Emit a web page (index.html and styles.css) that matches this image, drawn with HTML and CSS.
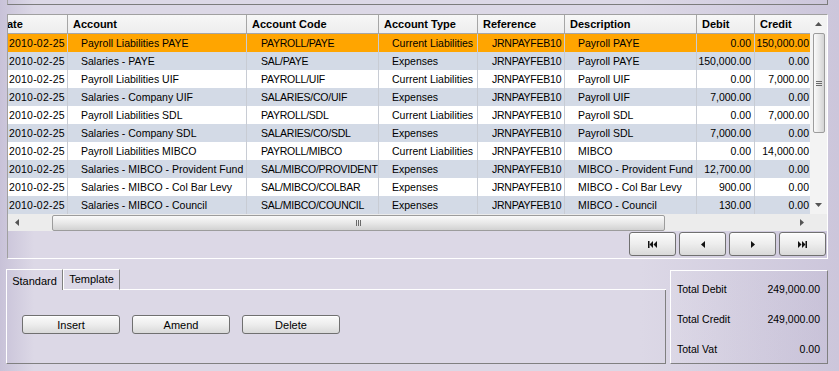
FILE: index.html
```html
<!DOCTYPE html>
<html>
<head>
<meta charset="utf-8">
<link rel="stylesheet" href="styles.css">
</head>
<body>
<div class="top-strip"></div>
<div class="grid-panel">
  <div class="grid-main">
    <div class="grid-view">
      <table class="grid">
        <colgroup>
          <col class="c-date"><col class="c-acc"><col class="c-code"><col class="c-type"><col class="c-ref"><col class="c-desc"><col class="c-deb"><col class="c-cre">
        </colgroup>
        <thead>
          <tr><th>Date</th><th>Account</th><th>Account Code</th><th>Account Type</th><th>Reference</th><th>Description</th><th>Debit</th><th class="last">Credit</th></tr>
        </thead>
        <tbody>
          <tr class="sel"><td class="d">2010-02-25</td><td>Payroll Liabilities PAYE</td><td class="caps">PAYROLL/PAYE</td><td>Current Liabilities</td><td class="caps">JRNPAYFEB10</td><td>Payroll PAYE</td><td class="num">0.00</td><td class="num last">150,000.00</td></tr>
          <tr class="alt"><td class="d">2010-02-25</td><td>Salaries - PAYE</td><td class="caps">SAL/PAYE</td><td>Expenses</td><td class="caps">JRNPAYFEB10</td><td>Payroll PAYE</td><td class="num">150,000.00</td><td class="num last">0.00</td></tr>
          <tr><td class="d">2010-02-25</td><td>Payroll Liabilities UIF</td><td class="caps">PAYROLL/UIF</td><td>Current Liabilities</td><td class="caps">JRNPAYFEB10</td><td>Payroll UIF</td><td class="num">0.00</td><td class="num last">7,000.00</td></tr>
          <tr class="alt"><td class="d">2010-02-25</td><td>Salaries - Company UIF</td><td class="caps">SALARIES/CO/UIF</td><td>Expenses</td><td class="caps">JRNPAYFEB10</td><td>Payroll UIF</td><td class="num">7,000.00</td><td class="num last">0.00</td></tr>
          <tr><td class="d">2010-02-25</td><td>Payroll Liabilities SDL</td><td class="caps">PAYROLL/SDL</td><td>Current Liabilities</td><td class="caps">JRNPAYFEB10</td><td>Payroll SDL</td><td class="num">0.00</td><td class="num last">7,000.00</td></tr>
          <tr class="alt"><td class="d">2010-02-25</td><td>Salaries - Company SDL</td><td class="caps">SALARIES/CO/SDL</td><td>Expenses</td><td class="caps">JRNPAYFEB10</td><td>Payroll SDL</td><td class="num">7,000.00</td><td class="num last">0.00</td></tr>
          <tr><td class="d">2010-02-25</td><td>Payroll Liabilities MIBCO</td><td class="caps">PAYROLL/MIBCO</td><td>Current Liabilities</td><td class="caps">JRNPAYFEB10</td><td>MIBCO</td><td class="num">0.00</td><td class="num last">14,000.00</td></tr>
          <tr class="alt"><td class="d">2010-02-25</td><td>Salaries - MIBCO - Provident Fund</td><td class="caps">SAL/MIBCO/PROVIDENT</td><td>Expenses</td><td class="caps">JRNPAYFEB10</td><td>MIBCO - Provident Fund</td><td class="num">12,700.00</td><td class="num last">0.00</td></tr>
          <tr><td class="d">2010-02-25</td><td>Salaries - MIBCO - Col Bar Levy</td><td class="caps">SAL/MIBCO/COLBAR</td><td>Expenses</td><td class="caps">JRNPAYFEB10</td><td>MIBCO - Col Bar Levy</td><td class="num">900.00</td><td class="num last">0.00</td></tr>
          <tr class="alt"><td class="d">2010-02-25</td><td>Salaries - MIBCO - Council</td><td class="caps">SAL/MIBCO/COUNCIL</td><td>Expenses</td><td class="caps">JRNPAYFEB10</td><td>MIBCO - Council</td><td class="num">130.00</td><td class="num last">0.00</td></tr>
        </tbody>
      </table>
    </div>
    <div class="vscroll">
      <div class="varrow"><svg width="7" height="4" viewBox="0 0 7 4"><polygon points="0,4 3.5,0 7,4" fill="#555"/></svg></div>
      <div class="vthumb"><span class="hgrip"></span><span class="hgrip"></span><span class="hgrip"></span></div>
      <div class="vtrack"></div>
      <div class="varrow"><svg width="7" height="4" viewBox="0 0 7 4"><polygon points="0,0 3.5,4 7,0" fill="#555"/></svg></div>
    </div>
  </div>
  <div class="hscroll-row">
    <div class="harrow"><svg width="4" height="7" viewBox="0 0 4 7"><polygon points="4,0 0,3.5 4,7" fill="#555"/></svg></div>
    <div class="htrack-l"></div>
    <div class="hthumb"><span class="vgrip"></span><span class="vgrip"></span><span class="vgrip"></span></div>
    <div class="htrack-r"></div>
    <div class="harrow"><svg width="4" height="7" viewBox="0 0 4 7"><polygon points="0,0 4,3.5 0,7" fill="#555"/></svg></div>
    <div class="corner"></div>
  </div>
  <div class="nav">
    <div class="btn navbtn"><svg width="9" height="7" viewBox="0 0 9 7"><rect x="0" y="0" width="1.5" height="7" fill="#111"/><polygon points="5,0 1.5,3.5 5,7" fill="#111"/><polygon points="9,0 5.5,3.5 9,7" fill="#111"/></svg></div>
    <div class="btn navbtn"><svg width="4" height="7" viewBox="0 0 4 7"><polygon points="4,0 0,3.5 4,7" fill="#111"/></svg></div>
    <div class="btn navbtn"><svg width="4" height="7" viewBox="0 0 4 7"><polygon points="0,0 4,3.5 0,7" fill="#111"/></svg></div>
    <div class="btn navbtn"><svg width="9" height="7" viewBox="0 0 9 7"><polygon points="0,0 3.5,3.5 0,7" fill="#111"/><polygon points="4,0 7.5,3.5 4,7" fill="#111"/><rect x="7.5" y="0" width="1.5" height="7" fill="#111"/></svg></div>
  </div>
</div>
<div class="bottom">
  <div class="tabs-area">
    <div class="tabs">
      <div class="tab active">Standard</div>
      <div class="tab">Template</div>
      <div class="tab-rest"></div>
    </div>
    <div class="tab-panel">
      <div class="btn action">Insert</div>
      <div class="btn action">Amend</div>
      <div class="btn action">Delete</div>
    </div>
  </div>
  <div class="totals">
    <div class="trow"><span>Total Debit</span><span>249,000.00</span></div>
    <div class="trow"><span>Total Credit</span><span>249,000.00</span></div>
    <div class="trow"><span>Total Vat</span><span>0.00</span></div>
  </div>
</div>
</body>
</html>
```

FILE: styles.css
```css
* { box-sizing: border-box; }

body {
  margin: 0;
  width: 839px;
  height: 371px;
  overflow: hidden;
  font-family: "Liberation Sans", Arial, sans-serif;
  font-size: 10.5px;
  color: #000;
  background: linear-gradient(to right, #c8c2d8 0px, #dcd8e6 34px, #dcd8e6 640px, #ccc6db 839px);
}

.top-strip {
  margin-left: 7px;
  width: 821px;
  height: 5px;
  border: 1px solid #7c7c7c;
  border-top: none;
  border-left-color: #a4a4a4;
}

.grid-panel {
  margin: 9px 0 0 7px;
  width: 821px;
  height: 245px;
  border: 1px solid;
  border-color: #a0a0a0 #ffffff #ffffff #a0a0a0;
  display: flex;
  flex-direction: column;
}

.grid-main {
  display: flex;
  height: 199px;
}

.grid-view {
  width: 802px;
  overflow: hidden;
  background: #fff;
}

.grid {
  margin-left: -14px;
  width: 816px;
  table-layout: fixed;
  border-collapse: separate;
  border-spacing: 0;
}

.c-date { width: 74px; }
.c-acc { width: 179px; }
.c-code { width: 132px; }
.c-type { width: 99px; }
.c-ref { width: 87px; }
.c-desc { width: 132px; }
.c-deb { width: 58px; }
.c-cre { width: 55px; }

.grid th {
  height: 19px;
  padding: 0 0 0 5px;
  text-align: left;
  font-size: 11px;
  font-weight: bold;
  background: linear-gradient(#f7f7f7, #ededed);
  border-right: 1px solid #a6a6a6;
  border-bottom: 1px solid #a6a6a6;
  white-space: nowrap;
  overflow: hidden;
}

.grid td {
  height: 18px;
  padding: 0 0 0 13px;
  border-right: 1px solid #c8ccd4;
  white-space: nowrap;
  overflow: hidden;
  background: #ffffff;
}

.grid td.d {
  padding-left: 15px;
  letter-spacing: 0.2px;
}

.grid td.caps {
  padding-left: 14px;
  letter-spacing: -0.25px;
}

.grid td.num {
  text-align: right;
  padding: 0 3px 0 0;
}

.grid td.last, .grid th.last { border-right: none; }
.grid td.num.last { padding-right: 1px; }

.grid tr.alt td { background: #d3dae6; }
.grid tr.sel td { background: #ffa500; }

.vscroll {
  width: 17px;
  background: #f3f3f3;
  display: flex;
  flex-direction: column;
}

.varrow {
  height: 18px;
  display: flex;
  align-items: center;
  justify-content: center;
}

.vthumb {
  margin-left: 3px;
  width: 12px;
  height: 100px;
  border: 1px solid #9c9c9c;
  border-radius: 2px;
  background: linear-gradient(to right, #fafafa, #e6e6e6 55%, #d4d4d4);
  display: flex;
  flex-direction: column;
  align-items: center;
  justify-content: center;
  gap: 1px;
}

.hgrip {
  width: 6px;
  height: 1px;
  background: #6a6a6a;
}

.vtrack { flex: 1; }

.hscroll-row {
  height: 17px;
  display: flex;
  background: #ececec;
}

.harrow {
  width: 17px;
  display: flex;
  align-items: center;
  justify-content: center;
}

.htrack-l { width: 27px; }
.htrack-r { flex: 1; }

.hthumb {
  margin-top: 1px;
  width: 613px;
  height: 16px;
  border: 1px solid #9c9c9c;
  border-radius: 2px;
  background: linear-gradient(#fafafa, #e8e8e8 50%, #d2d2d2);
  display: flex;
  align-items: center;
  justify-content: center;
  gap: 1px;
}

.vgrip {
  width: 1px;
  height: 6px;
  background: #6a6a6a;
}

.corner { width: 17px; }

.nav {
  height: 27px;
  display: flex;
  justify-content: flex-end;
  gap: 3px;
  padding: 1px 1px 0 0;
}

.btn {
  border: 1px solid #707070;
  border-radius: 3px;
  background: linear-gradient(#fbfbfb, #ededed 50%, #d9d9d9);
  display: flex;
  align-items: center;
  justify-content: center;
  box-shadow: inset 0 1px 0 #ffffff;
}

.navbtn {
  width: 47px;
  height: 24px;
}

.bottom {
  display: flex;
  align-items: flex-start;
}

.tabs-area {
  margin: 10px 0 0 6px;
  width: 660px;
}

.tabs {
  display: flex;
  height: 21px;
}

.tab {
  width: 57px;
  height: 21px;
  border-top: 1px solid #ffffff;
  border-left: 1px solid #ffffff;
  border-right: 1px solid #808080;
  border-bottom: 1px solid #ffffff;
  padding-top: 3px;
  font-size: 11px;
  text-align: center;
  white-space: nowrap;
}

.tab.active {
  border-bottom: none;
  padding-top: 5px;
}

.tab-rest {
  flex: 1;
  border-bottom: 1px solid #ffffff;
}

.tab-panel {
  height: 74px;
  border-left: 1px solid #ffffff;
  border-right: 1px solid #808080;
  border-bottom: 1px solid #808080;
  padding: 25px 0 0 15px;
  display: flex;
  align-items: flex-start;
  gap: 12px;
}

.action {
  width: 98px;
  height: 19px;
  font-size: 11px;
}

.totals {
  margin: 11px 0 0 4px;
  width: 158px;
  height: 94px;
  border: 1px solid;
  border-color: #ffffff #808080 #808080 #ffffff;
  padding: 3px 7px 0 6px;
  background: linear-gradient(to right, rgba(255,255,255,0.06), rgba(170,160,195,0.12));
  overflow: hidden;
}

.trow {
  height: 30px;
  display: flex;
  justify-content: space-between;
  align-items: center;
}
```
